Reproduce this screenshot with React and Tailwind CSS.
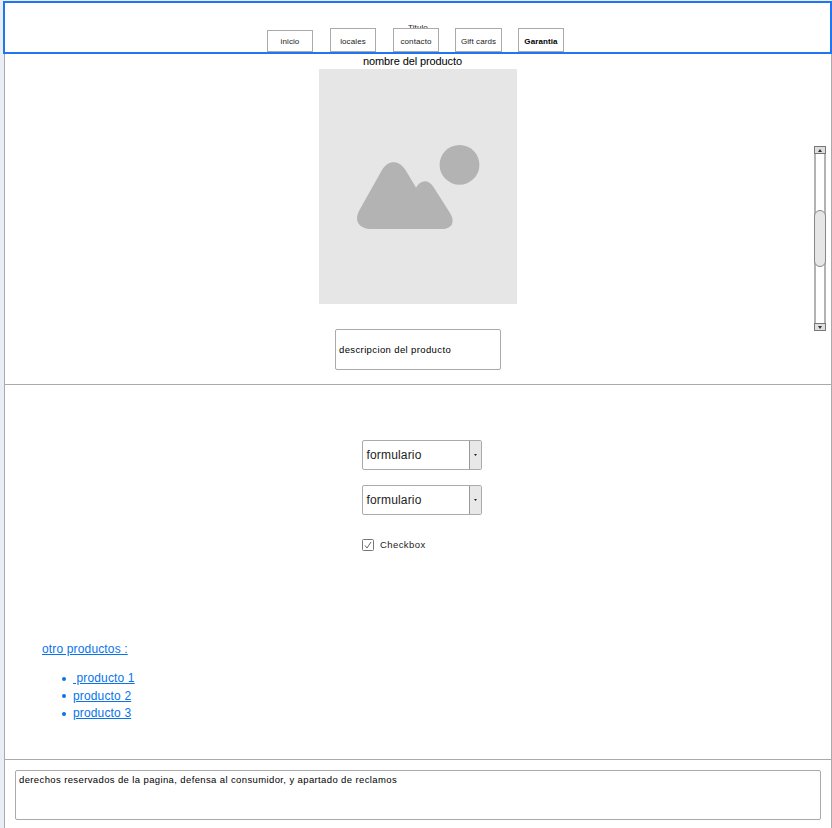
const tabs = [
  { label: "inicio", box: "h-[22px] w-[46px] pt-[2px]" },
  { label: "locales", box: "h-6 w-[46px] ml-[17px] pt-[3px]" },
  { label: "contacto", box: "h-6 w-[46px] ml-[17px] pt-[3px]" },
  { label: "Gift cards", box: "h-6 w-[47px] ml-4 pt-[3px]" },
  { label: "Garantia", box: "h-6 w-[46px] ml-4 pt-[3px] font-bold text-black" },
];

function Header() {
  return (
    <header className="relative h-[53px] shrink-0 border-2 border-[#1f76f0] bg-white">
      <span className="absolute left-[403px] top-[19px] text-[8px] leading-[12px] tracking-[0.1px]">
        Titulo
      </span>
      <nav className="relative flex h-[49px] items-end pl-[262px]">
        {tabs.map((tab) => (
          <a
            key={tab.label}
            className={`flex items-center justify-center whitespace-nowrap border border-[#aaa] bg-white text-[8px] leading-[10px] tracking-[0.1px] ${tab.box}`}
          >
            {tab.label}
          </a>
        ))}
      </nav>
    </header>
  );
}

function ImagePlaceholder() {
  return (
    <svg className="block h-[235px] w-[198px] bg-[#e6e6e6]" viewBox="319 69 198 235">
      <circle cx="459.5" cy="164.8" r="19.9" fill="#b3b3b3" />
      <path
        fill="#b3b3b3"
        d="M382 170C388 159.500 399 159.500 405.500 170L416 187.500C421 179.500 428.500 179 433.500 187L450 213C455.500 222 452 229 442 229H372C359 229 353.500 221 359.500 210Z"
      />
    </svg>
  );
}

function Scrollbar() {
  return (
    <div className="flex h-[185px] w-3 flex-col border-x-2 border-[#b3b3b3] bg-white">
      <div className="-mx-[2px] flex h-2 shrink-0 items-center justify-center border border-[#777] bg-[#dedede]">
        <svg className="h-[3px] w-1" viewBox="0 0 4 3"><path d="M0 3L2 0L4 3Z" fill="#333" /></svg>
      </div>
      <div className="-mx-[2px] mt-[56px] h-[57px] shrink-0 rounded-[6px] border border-[#888] bg-[#e6e6e6]" />
      <div className="-mx-[2px] mt-auto flex h-2 shrink-0 items-center justify-center border border-[#777] bg-[#dedede]">
        <svg className="h-[3px] w-1" viewBox="0 0 4 3"><path d="M0 0H4L2 3Z" fill="#333" /></svg>
      </div>
    </div>
  );
}

function Select() {
  return (
    <div className="flex h-[30px] w-[120px] overflow-hidden rounded-[2px] border border-[#aaa] text-[12px] tracking-[0.17px]">
      <span className="flex-1 pl-[3.500px] leading-[28px]">formulario</span>
      <span className="flex w-[12px] items-center justify-center border-l border-[#999] bg-[#e8e8e8]">
        <svg className="h-[2px] w-[3px]" viewBox="0 0 3 2"><path d="M0 0H3L1.500 2Z" fill="#222" /></svg>
      </span>
    </div>
  );
}

function ProductLink({ children }) {
  return (
    <li className="flex items-center">
      <span className="mr-[7px] h-1 w-1 rounded-full bg-[#0873ec]" />
      <a className="whitespace-pre underline">{children}</a>
    </li>
  );
}

export default function App() {
  return (
    <div className="flex h-[828px] w-[832px] flex-col overflow-hidden bg-[#e9eef6] pl-[3px] pt-[1px] font-['Liberation_Sans',Arial,sans-serif] text-[#222]">
      <Header />
      <main className="ml-[1px] flex flex-1 flex-col border-x border-[#aaa] bg-white">
        <section className="flex h-[331px] shrink-0 border-b border-[#aaa]">
          <div className="ml-[314px] w-[198px]">
            <h1 className="ml-[44px] h-[15px] whitespace-nowrap text-[11px] leading-[15px] tracking-[-0.1px] text-black">
              nombre del producto
            </h1>
            <ImagePlaceholder />
            <div className="ml-4 mt-[25px] h-[41px] w-[166px] rounded-[2px] border border-[#aaa] pl-[3px] text-[9.500px] leading-[39px] tracking-[0.38px] text-black">
              descripcion del producto
            </div>
          </div>
          <div className="ml-auto mr-[5px] mt-[92px]">
            <Scrollbar />
          </div>
        </section>

        <section className="flex h-[375px] shrink-0 flex-col border-b border-[#aaa] pt-[55px]">
          <form className="ml-[357px] flex flex-col">
            <Select />
            <div className="h-[15px]" />
            <Select />
            <label className="mt-[23px] flex h-[13px] items-center text-[9.500px] leading-[13px] tracking-[0.42px]">
              <svg className="mr-[6px] h-3 w-3" viewBox="0 0 12 12" fill="none">
                <rect x="0.500" y="0.500" width="11" height="11" rx="1" stroke="#777" />
                <path d="M3 6.500L5 9L9 3" stroke="#666" />
              </svg>
              Checkbox
            </label>
          </form>
          <div className="ml-[37px] mt-[89px] text-[12px] tracking-[0.15px] text-[#0873ec]">
            <p className="leading-[18px] underline">otro productos :</p>
            <ul className="ml-5 mt-3 leading-[17.500px]">
              <ProductLink>{" producto 1"}</ProductLink>
              <ProductLink>producto 2</ProductLink>
              <ProductLink>producto 3</ProductLink>
            </ul>
          </div>
        </section>

        <footer className="flex-1 px-[10px] pt-[10px]">
          <div className="h-[50px] w-[806px] rounded-[2px] border border-[#aaa] pl-[3px] pt-[2px] text-[9.500px] leading-[13px] tracking-[0.38px] text-black">
            derechos reservados de la pagina, defensa al consumidor, y apartado de reclamos
          </div>
        </footer>
      </main>
    </div>
  );
}
